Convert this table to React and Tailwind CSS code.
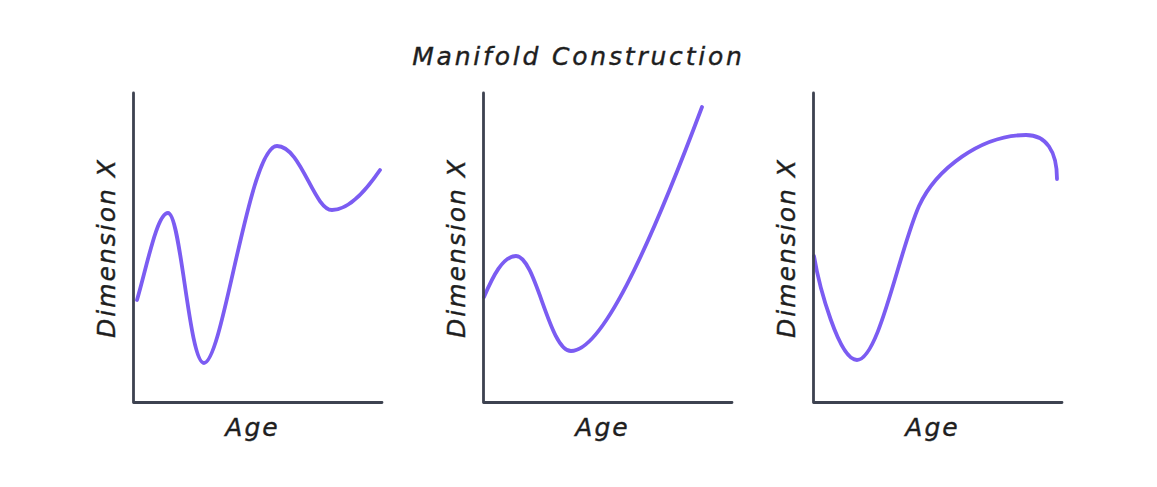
import React from "react";

const AXIS = "#3d4250";
const CURVE = "#7b5cf2";

function Chart({ d }) {
  return (
    <svg width="253" height="314" viewBox="0 0 253 314" className="block shrink-0">
      <path d={d} fill="none" stroke={CURVE} strokeWidth="3.8" strokeLinecap="round" strokeLinejoin="round" />
      <path d="M2.5 2 L2.5 311.5 L251 311.5" fill="none" stroke={AXIS} strokeWidth="2.8" strokeLinecap="round" strokeLinejoin="round" />
    </svg>
  );
}

function Panel({ d, className }) {
  return (
    <div className={"flex flex-col " + className}>
      <div className="flex">
        <div className="w-[23px] h-[314px] mr-[13px] flex items-center justify-center">
          <span className="[writing-mode:vertical-rl] rotate-180 text-[25px] leading-[23px] tracking-[2px] whitespace-nowrap">
            Dimension X
          </span>
        </div>
        <Chart d={d} />
      </div>
      <div className="pl-[36px] mt-[8px]">
        <div className="w-[253px] pr-[10px] text-center text-[25px] leading-[30px] tracking-[2px]">Age</div>
      </div>
    </div>
  );
}

export default function App() {
  return (
    <div className="w-[1157px] h-[487px] bg-white text-[#1e1e1e] italic font-['DejaVu_Sans',sans-serif] [-webkit-text-stroke:0.4px_#1e1e1e] flex flex-col overflow-hidden">
      <h1 className="mt-[42px] text-center text-[25px] leading-[30px] tracking-[2.8px] font-normal">
        Manifold Construction
      </h1>
      <div className="flex mt-[19px]">
        <Panel
          className="ml-[95px]"
          d="M6 209 C 16 175, 26 122, 37 122 C 50 122, 58 272, 73 272 C 92 272, 118 55, 146 55 C 170 55, 183 119, 201 119 C 220 119, 238 95, 249 79"
        />
        <Panel
          className="ml-[61px]"
          d="M3 206 C 12 185, 22 165, 35 165 C 55 165, 68 260, 90 260 C 120 260, 165 165, 221 16"
        />
        <Panel
          className="ml-[41px]"
          d="M3 165 C 8 195, 28 269, 46 269 C 68 269, 88 160, 108 115 C 125 78, 170 44, 215 44 C 235 44, 246 60, 246 88"
        />
      </div>
    </div>
  );
}
